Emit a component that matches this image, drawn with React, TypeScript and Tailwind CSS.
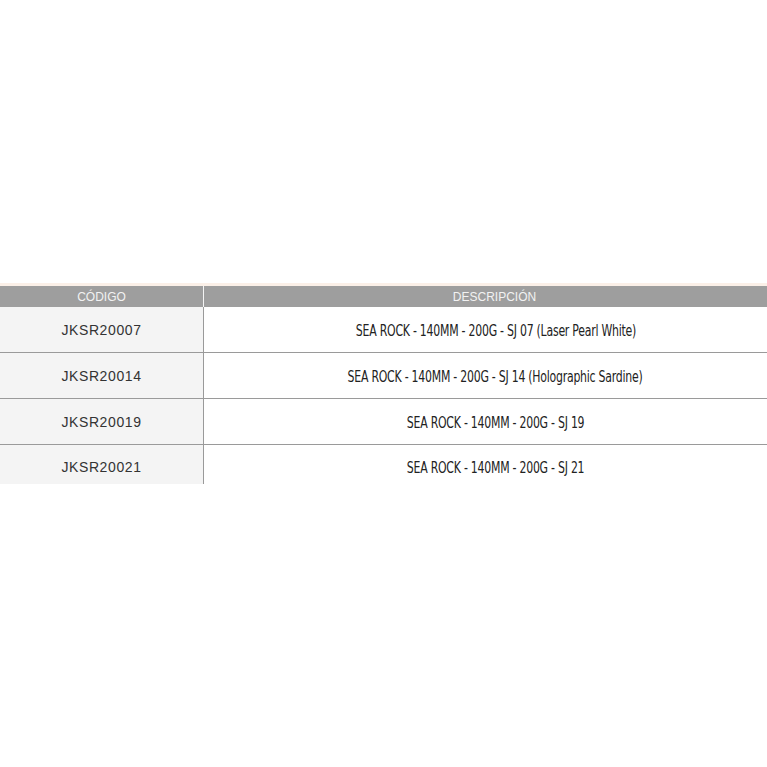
const rows = [
  { code: "JKSR20007", desc: "SEA ROCK - 140MM - 200G - SJ 07 (Laser Pearl White)" },
  { code: "JKSR20014", desc: "SEA ROCK - 140MM - 200G - SJ 14 (Holographic Sardine)" },
  { code: "JKSR20019", desc: "SEA ROCK - 140MM - 200G - SJ 19" },
  { code: "JKSR20021", desc: "SEA ROCK - 140MM - 200G - SJ 21" },
]

export default function App() {
  return (
    <div className="w-[767px] h-[767px] bg-white flex flex-col">
      <div className="h-[283px]" />
      {/* faint top band */}
      <div className="h-[3px] bg-[#fbf0e8]" />

      {/* Header */}
      <div className="flex h-[21px] bg-[#9e9e9e] text-[12px] text-[#f2f2f2] font-['Liberation_Sans',Arial,sans-serif]">
        <div className="w-[203px] flex items-center justify-center">CÓDIGO</div>
        <div className="w-[1px] bg-[#f4f4f4]" />
        <div className="flex-1 flex items-center justify-center pl-[18px]">DESCRIPCIÓN</div>
      </div>

      {/* Rows */}
      {rows.map((row, i) => {
        const last = i === rows.length - 1
        return (
          <div
            key={row.code}
            className={`flex ${last ? "h-[39px]" : "h-[46px] border-b border-[#9a9a9a]"}`}
          >
            <div
              className={`w-[203px] bg-[#f4f4f4] flex items-center justify-center ${last ? "pt-[6px]" : "pt-[2px]"} text-[14px] tracking-[0.6px] text-[#333] font-['Liberation_Sans',Arial,sans-serif]`}
            >
              {row.code}
            </div>
            <div className="w-[1px] bg-[#9a9a9a]" />
            <div
              className={`flex-1 flex items-center justify-center pl-[20px] ${last ? "pt-[7px]" : "pt-[3px]"} text-[15px] text-[#222] font-['DejaVu_Sans_Condensed',sans-serif] tracking-[-0.3px]`}
            >
              <span className="inline-block whitespace-nowrap scale-x-[0.81]">{row.desc}</span>
            </div>
          </div>
        )
      })}
    </div>
  )
}
